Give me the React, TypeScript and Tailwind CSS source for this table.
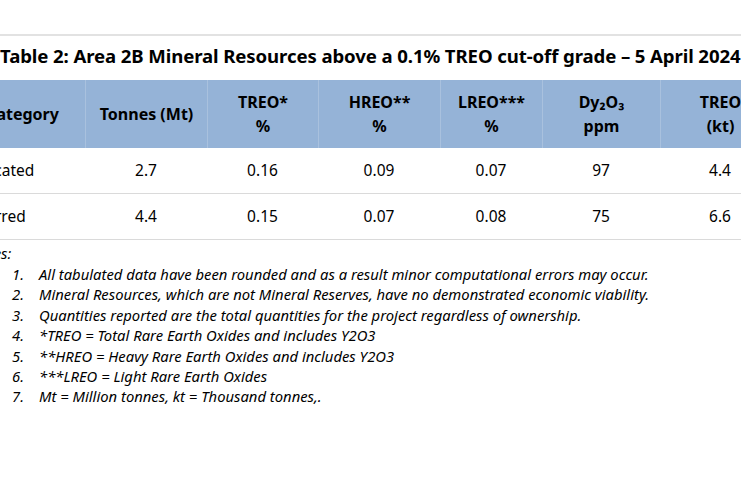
import React from "react";

const cols = "grid-cols-[125px_122px_111px_122px_102px_118px_120px]";

const rows = [
  ["Indicated", "2.7", "0.16", "0.09", "0.07", "97", "4.4"],
  ["Inferred", "4.4", "0.15", "0.07", "0.08", "75", "6.6"],
];

const notes = [
  "All tabulated data have been rounded and as a result minor computational errors may occur.",
  "Mineral Resources, which are not Mineral Reserves, have no demonstrated economic viability.",
  "Quantities reported are the total quantities for the project regardless of ownership.",
  "*TREO = Total Rare Earth Oxides and includes Y2O3",
  "**HREO = Heavy Rare Earth Oxides and includes Y2O3",
  "***LREO = Light Rare Earth Oxides",
  "Mt = Million tonnes, kt = Thousand tonnes,.",
];

export default function App() {
  return (
    <div
      className="w-[741px] h-[486px] overflow-hidden bg-white text-black"
      style={{ fontFamily: '"Noto Sans", "Open Sans", sans-serif' }}
    >
      <div className="pt-[34px]">
        <div className="h-[2px] bg-[#e2e2e2]" />
        <div className="mt-[10px] h-[20px] flex items-center whitespace-nowrap text-[18.6px] font-bold leading-none tracking-[-0.1px]">
          Table 2: Area 2B Mineral Resources above a 0.1% TREO cut-off grade – 5 April 2024
        </div>
        <div className="ml-[-40px] w-[820px] mt-[14px]">
          <div className={`grid ${cols} h-[68px] bg-[#95b3d7] text-[16px] font-bold leading-[24px]`}>
            {[
              ["Category"],
              ["Tonnes (Mt)"],
              ["TREO*", "%"],
              ["HREO**", "%"],
              ["LREO***", "%"],
              ["Dy₂O₃", "ppm"],
              ["TREO", "(kt)"],
            ].map((c, i) => (
              <div
                key={i}
                className={`flex flex-col items-center justify-center text-center ${i > 0 ? "border-l border-[#a9c1de]" : ""}`}
              >
                {c.map((t, j) => (
                  <span key={j}>{t}</span>
                ))}
              </div>
            ))}
          </div>
          {rows.map((r, ri) => (
            <div key={ri} className={`grid ${cols} h-[46px] border-b border-[#dadada] text-[15.5px]`}>
              {r.map((t, i) => (
                <div
                  key={i}
                  className={`flex items-center ${i === 0 ? "justify-start pl-[6px]" : "justify-center"}`}
                >
                  {t}
                </div>
              ))}
            </div>
          ))}
        </div>
        <div className="ml-[-37px] mt-[2px] text-[14.8px] italic leading-[20.4px]">
          <div className="h-[22px] flex items-center pl-[7px]">Notes:</div>
          {notes.map((n, i) => (
            <div key={i} className="flex whitespace-nowrap">
              <span className="w-[76px] pl-[49px]">{i + 1}.</span>
              <span>{n}</span>
            </div>
          ))}
        </div>
      </div>
    </div>
  );
}
